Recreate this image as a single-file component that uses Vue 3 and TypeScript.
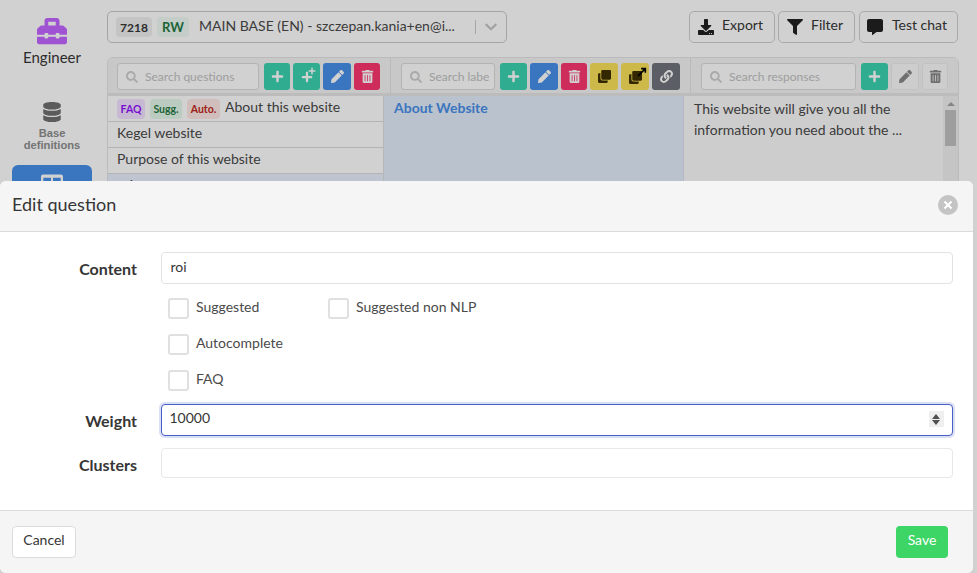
<script setup lang="ts">
import { h, onMounted, ref } from 'vue'

const paths: Record<string, [number, string]> = {
  plus: [448, 'M416 208H272V64c0-17.67-14.33-32-32-32h-32c-17.67 0-32 14.33-32 32v144H32c-17.67 0-32 14.33-32 32v32c0 17.67 14.33 32 32 32h144v144c0 17.67 14.33 32 32 32h32c17.67 0 32-14.33 32-32V304h144c17.67 0 32-14.33 32-32v-32c0-17.67-14.33-32-32-32z'],
  pencil: [512, 'M497.9 142.1l-46.1 46.1c-4.7 4.7-12.3 4.7-17 0l-111-111c-4.7-4.7-4.7-12.3 0-17l46.1-46.1c18.7-18.7 49.1-18.7 67.9 0l60.1 60.1c18.8 18.7 18.8 49.1 0 67.9zM284.2 99.8L21.6 362.4.4 483.9c-2.9 16.4 11.4 30.6 27.8 27.8l121.5-21.3 262.6-262.6c4.7-4.7 4.7-12.3 0-17l-111-111c-4.8-4.7-12.4-4.7-17.1 0z'],
  trash: [448, 'M32 464a48 48 0 0 0 48 48h288a48 48 0 0 0 48-48V128H32zm272-256a16 16 0 0 1 32 0v224a16 16 0 0 1-32 0zm-96 0a16 16 0 0 1 32 0v224a16 16 0 0 1-32 0zm-96 0a16 16 0 0 1 32 0v224a16 16 0 0 1-32 0zM432 32H312l-9.4-18.7A24 24 0 0 0 281.1 0H166.8a23.72 23.72 0 0 0-21.4 13.3L136 32H16A16 16 0 0 0 0 48v32a16 16 0 0 0 16 16h416a16 16 0 0 0 16-16V48a16 16 0 0 0-16-16z'],
  search: [512, 'M505 442.7L405.3 343c-4.5-4.5-10.6-7-17-7H372c27.6-35.3 44-79.7 44-128C416 93.1 322.9 0 208 0S0 93.1 0 208s93.1 208 208 208c48.3 0 92.7-16.4 128-44v16.3c0 6.4 2.5 12.5 7 17l99.7 99.7c9.4 9.4 24.6 9.4 33.9 0l28.3-28.3c9.4-9.4 9.4-24.6.1-34zM208 336c-70.7 0-128-57.2-128-128 0-70.7 57.2-128 128-128 70.7 0 128 57.2 128 128 0 70.7-57.2 128-128 128z'],
  filter: [512, 'M487.976 0H24.028C2.71 0-8.047 25.866 7.058 40.971L192 225.941V432c0 7.831 3.821 15.17 10.237 19.662l80 55.98C298.02 518.69 320 507.493 320 487.98V225.941l184.947-184.97C520.021 25.896 509.338 0 487.976 0z'],
  download: [512, 'M216 0h80c13.3 0 24 10.7 24 24v168h87.7c17.8 0 26.7 21.5 14.1 34.1L269.7 378.3c-7.5 7.5-19.8 7.5-27.3 0L90.1 226.1c-12.6-12.6-3.7-34.1 14.1-34.1H192V24c0-13.3 10.7-24 24-24zm296 376v112c0 13.3-10.7 24-24 24H24c-13.3 0-24-10.7-24-24V376c0-13.3 10.7-24 24-24h146.7l49 49c20.1 20.1 52.5 20.1 72.6 0l49-49H488c13.3 0 24 10.7 24 24zm-124 88c0-11-9-20-20-20s-20 9-20 20 9 20 20 20 20-9 20-20zm64 0c0-11-9-20-20-20s-20 9-20 20 9 20 20 20 20-9 20-20z'],
  comment: [512, 'M448 0H64C28.7 0 0 28.7 0 64v288c0 35.3 28.7 64 64 64h96v84c0 9.8 11.2 15.5 19.1 9.7L304 416h144c35.3 0 64-28.7 64-64V64c0-35.3-28.7-64-64-64z'],
  database: [448, 'M448 73.143v45.714C448 159.143 347.667 192 224 192S0 159.143 0 118.857V73.143C0 32.857 100.333 0 224 0s224 32.857 224 73.143zM448 176v102.857C448 319.143 347.667 352 224 352S0 319.143 0 278.857V176c48.125 33.143 136.208 48.572 224 48.572S399.874 209.143 448 176zm0 160v102.857C448 479.143 347.667 512 224 512S0 479.143 0 438.857V336c48.125 33.143 136.208 48.572 224 48.572S399.874 369.143 448 336z'],
  toolbox: [512, 'M502.63 214.63l-45.25-45.25c-6-6-14.14-9.37-22.63-9.37H384V80c0-26.51-21.49-48-48-48H176c-26.51 0-48 21.49-48 48v80H77.25c-8.49 0-16.62 3.37-22.63 9.37L9.37 214.63c-6 6-9.37 14.14-9.37 22.63V320h128v-16c0-8.84 7.16-16 16-16h32c8.84 0 16 7.16 16 16v16h128v-16c0-8.84 7.16-16 16-16h32c8.84 0 16 7.16 16 16v16h128v-82.75c0-8.48-3.37-16.62-9.37-22.62zM320 160H192V96h128v64zm64 208c0 8.84-7.16 16-16 16h-32c-8.84 0-16-7.16-16-16v-16H192v16c0 8.84-7.16 16-16 16h-32c-8.84 0-16-7.16-16-16v-16H0v96c0 17.67 14.33 32 32 32h448c17.67 0 32-14.33 32-32v-96H384v16z'],
  clone: [512, 'M464 0c26.51 0 48 21.49 48 48v288c0 26.51-21.49 48-48 48H176c-26.51 0-48-21.49-48-48V48c0-26.51 21.49-48 48-48h288M176 416c-44.112 0-80-35.888-80-80V128H48c-26.51 0-48 21.49-48 48v288c0 26.51 21.49 48 48 48h288c26.51 0 48-21.49 48-48v-48H176z'],
  link: [512, 'M326.612 185.391c59.747 59.809 58.927 155.698.36 214.59-.11.12-.24.25-.36.37l-67.2 67.2c-59.27 59.27-155.699 59.262-214.96 0-59.27-59.26-59.27-155.7 0-214.96l37.106-37.106c9.84-9.84 26.786-3.3 27.294 10.606.648 17.722 3.826 35.527 9.69 52.721 1.986 5.822.567 12.262-3.783 16.612l-13.087 13.087c-28.026 28.026-28.905 73.66-1.155 101.96 28.024 28.579 74.086 28.749 102.325.51l67.2-67.19c28.191-28.191 28.073-73.757 0-101.83-3.701-3.694-7.429-6.564-10.341-8.569a16.037 16.037 0 0 1-6.947-12.606c-.396-10.567 3.348-21.456 11.698-29.806l21.054-21.055c5.521-5.521 14.182-6.199 20.584-1.731a152.482 152.482 0 0 1 20.522 17.197zM467.547 44.449c-59.261-59.262-155.69-59.27-214.96 0l-67.2 67.2c-.12.12-.25.25-.36.37-58.566 58.892-59.387 154.781.36 214.59a152.454 152.454 0 0 0 20.521 17.196c6.402 4.468 15.064 3.789 20.584-1.731l21.054-21.055c8.35-8.35 12.094-19.239 11.698-29.806a16.037 16.037 0 0 0-6.947-12.606c-2.912-2.005-6.64-4.875-10.341-8.569-28.073-28.073-28.191-73.639 0-101.83l67.2-67.19c28.239-28.239 74.3-28.069 102.325.51 27.75 28.3 26.872 73.934-1.155 101.96l-13.087 13.087c-4.35 4.35-5.769 10.79-3.783 16.612 5.864 17.194 9.042 34.999 9.69 52.721.509 13.906 17.454 20.446 27.294 10.606l37.106-37.106c59.271-59.259 59.271-155.699.001-214.959z'],
  chevron: [448, 'M207.029 381.476L12.686 187.132c-9.373-9.373-9.373-24.569 0-33.941l22.667-22.667c9.357-9.357 24.522-9.375 33.901-.04L224 284.505l154.745-154.021c9.379-9.335 24.544-9.317 33.901.04l22.667 22.667c9.373 9.373 9.373 24.569 0 33.941L240.971 381.476c-9.373 9.372-24.569 9.372-33.942 0z'],
  layout: [512, 'M464 32H48C21.5 32 0 53.5 0 80v352c0 26.5 21.5 48 48 48h416c26.500 0 48-21.500 48-48V80c0-26.500-21.500-48-48-48zM232 432H54V256h178zm0-208H54V110h178zm226 208H280V256h178zm0-208H280V110h178z'],
}

const Ico = (props: { n: string }) => {
  const [w, d] = paths[props.n]
  return h('svg', { viewBox: `0 0 ${w} 512`, fill: 'currentColor' }, [h('path', { d })])
}
Ico.props = ['n']

interface Btn { icon: string; tone: string; w: number }
const columns: { ph: string; search: number; cls: string; btns: Btn[] }[] = [
  {
    ph: 'Search questions', search: 142, cls: 'c1',
    btns: [
      { icon: 'plus', tone: 'green', w: 26 },
      { icon: 'plusplus', tone: 'green', w: 27 },
      { icon: 'pencil', tone: 'blue', w: 28 },
      { icon: 'trash', tone: 'red', w: 26 },
    ],
  },
  {
    ph: 'Search labels', search: 94, cls: 'c2',
    btns: [
      { icon: 'plus', tone: 'green', w: 27 },
      { icon: 'pencil', tone: 'blue', w: 28 },
      { icon: 'trash', tone: 'red', w: 26 },
      { icon: 'clone', tone: 'yellow', w: 28 },
      { icon: 'cloneout', tone: 'yellow', w: 28 },
      { icon: 'link', tone: 'dark', w: 28 },
    ],
  },
  {
    ph: 'Search responses', search: 155, cls: 'c3',
    btns: [
      { icon: 'plus', tone: 'green', w: 27 },
      { icon: 'pencil', tone: 'ghost', w: 28 },
      { icon: 'trash', tone: 'ghost', w: 26 },
    ],
  },
]

const weight = ref<HTMLInputElement | null>(null)
onMounted(() => weight.value?.focus())
</script>

<template>
  <div class="page">
    <aside class="side">
      <div class="role">
        <Ico n="toolbox" class="role-ico" />
        <span>Engineer</span>
      </div>
      <div class="nav">
        <Ico n="database" class="nav-ico" />
        <span>Base<br />definitions</span>
      </div>
      <div class="nav active">
        <Ico n="layout" class="nav-ico" />
      </div>
    </aside>

    <main class="main">
      <header class="top">
        <div class="base">
          <span class="chip grey">7218</span>
          <span class="chip rw">RW</span>
          <span class="base-name">MAIN BASE (EN) - szczepan.kania+en@i...</span>
          <span class="sep"></span>
          <Ico n="chevron" class="chev" />
        </div>
        <div class="actions">
          <button class="act e"><Ico n="download" class="act-ico" />Export</button>
          <button class="act f"><Ico n="filter" class="act-ico" />Filter</button>
          <button class="act t"><Ico n="comment" class="act-ico" />Test chat</button>
        </div>
      </header>

      <section class="panel">
        <div class="bar">
          <div v-for="c in columns" :key="c.ph" class="tools" :class="c.cls">
            <div class="search" :style="{ width: c.search + 'px' }">
              <Ico n="search" class="s-ico" />
              <span class="s-text">{{ c.ph }}</span>
            </div>
            <div class="btns">
              <button
                v-for="(b, i) in c.btns"
                :key="i"
                class="tb"
                :class="b.tone"
                :style="{ width: b.w + 'px' }"
              >
                <span v-if="b.icon === 'plusplus'" class="pp">
                  <Ico n="plus" class="pp-a" />
                  <Ico n="plus" class="pp-b" />
                </span>
                <span v-else-if="b.icon === 'cloneout'" class="pp">
                  <Ico n="clone" class="co-a" />
                  <svg class="co-b" viewBox="0 0 12 12" fill="none" stroke="#000" stroke-width="2"><path d="M1 11 9 3M5 2h5v5" /></svg>
                </span>
                <Ico v-else :n="b.icon" class="tb-ico" />
              </button>
            </div>
          </div>
        </div>
        <div class="cols">
          <div class="qs">
            <div class="q">
              <span class="tag faq">FAQ</span><span class="tag sugg">Sugg.</span><span class="tag auto">Auto.</span>
              <span>About this website</span>
            </div>
            <div class="q">Kegel website</div>
            <div class="q">Purpose of this website</div>
            <div class="q sel">roi</div>
          </div>
          <div class="ls"><strong>About Website</strong></div>
          <div class="rs">
            <p>This website will give you all the information you need about the ...</p>
            <div class="scroll">
              <span class="arrow"></span>
              <span class="thumb"></span>
            </div>
          </div>
        </div>
      </section>
    </main>

    <div class="shade"></div>

    <div class="modal">
      <div class="m-head">
        <span class="m-title">Edit question</span>
        <button class="close" aria-label="Close"></button>
      </div>
      <div class="m-body">
        <div class="field">
          <label class="lab">Content</label>
          <input class="inp" value="roi" />
        </div>
        <div class="checks">
          <div class="check-row">
            <label class="chk w160"><span class="box"></span>Suggested</label>
            <label class="chk"><span class="box"></span>Suggested non NLP</label>
          </div>
          <div class="check-row">
            <label class="chk"><span class="box"></span>Autocomplete</label>
          </div>
          <div class="check-row">
            <label class="chk"><span class="box"></span>FAQ</label>
          </div>
        </div>
        <div class="field">
          <label class="lab">Weight</label>
          <div class="num">
            <input ref="weight" class="inp focus" type="number" value="10000" />
            <span class="spin"><i class="up"></i><i class="down"></i></span>
          </div>
        </div>
        <div class="field f-clusters">
          <label class="lab">Clusters</label>
          <div class="inp tags"></div>
        </div>
      </div>
      <div class="m-foot">
        <button class="cancel">Cancel</button>
        <button class="save">Save</button>
      </div>
    </div>
  </div>
</template>

<style>
html, body { margin: 0; overflow: hidden; background: #fff; }
</style>

<style scoped>
* { box-sizing: border-box; }
.page {
  position: relative;
  width: 977px;
  height: 573px;
  overflow: hidden;
  display: flex;
  font-family: Lato, sans-serif;
  color: #4a4a4a;
  background: #fff;
}
button { font-family: inherit; cursor: pointer; }

.side { width: 104px; margin-right: 3px; flex: none; display: flex; flex-direction: column; align-items: center; }
.role { display: flex; flex-direction: column; align-items: center; padding-top: 17px; color: #363636; font-size: 15px; line-height: 20px; }
.role-ico { width: 30px; height: 30px; color: #c365ff; margin-bottom: 1px; margin-top: -1px; }
.nav {
  width: 80px;
  display: flex;
  flex-direction: column;
  align-items: center;
  margin-top: 35px;
  font: bold 11.2px/12px "Liberation Sans", sans-serif;
  color: #8e8e8e;
  text-align: center;
}
.nav-ico { width: 20px; height: 20px; color: #6f6f6f; margin-bottom: 5px; }
.nav span { display: block; }
.nav.active { height: 70px; margin-top: 14px; background: #478fe9; border-radius: 6px; padding-top: 8px; }
.nav.active .nav-ico { color: #fff; width: 22px; height: 22px; }

.main { flex: 1; min-width: 0; padding: 11px 19px 0 0; display: flex; flex-direction: column; }
.top { display: flex; justify-content: space-between; height: 32px; }
.base {
  width: 400px;
  border: 1px solid #c9c9c9;
  border-radius: 5px;
  background: #fff;
  display: flex;
  align-items: center;
  padding-left: 8px;
  font-size: 14px;
}
.chip { height: 20px; border-radius: 4px; display: flex; align-items: center; justify-content: center; font-weight: 700; font-size: 12px; }
.chip.grey { width: 36px; background: #f0f0f0; color: #363636; }
.chip.rw { width: 32px; margin-left: 5px; background: #effaf3; color: #257942; font-size: 13px; }
.base-name { margin-left: 10px; width: 268px; white-space: nowrap; margin-top: -3px; }
.sep { width: 1px; height: 14px; background: #ccc; margin-left: 8px; }
.chev { width: 12px; height: 14px; color: #c4c4c4; margin-left: 9px; }
.actions { display: flex; gap: 3px; }
.act {
  height: 32px;
  background: #fff;
  border: 1px solid #cfcfcf;
  border-radius: 5px;
  color: #363636;
  font-size: 14px;
  display: flex;
  align-items: center;
  justify-content: flex-start;
  padding: 0 0 5px 8px;
}
.act-ico { width: 16px; height: 16px; color: #222; margin-right: 8px; margin-top: 5px; }
.act.e { width: 86px; }
.act.f { width: 77px; margin-right: 1px; }
.act.t { width: 99px; padding-left: 7px; }
.act.t .act-ico { margin-right: 9px; }

.panel {
  margin-top: 14px;
  margin-right: -1px;
  border: 1px solid #e5e5e5;
  border-radius: 6px 6px 0 0;
  height: 500px;
  background: #fbfbfb;
  overflow: hidden;
}
.bar { display: flex; height: 38px; background: #f5f5f5; border-bottom: 3px solid #e6e6e6; }
.tools { display: flex; align-items: flex-start; padding-top: 5px; border-right: 1px solid #e2e2e2; }
.tools.c1 { width: 283px; padding-left: 9px; }
.tools.c2 { width: 300px; padding-left: 10px; }
.tools.c3 { flex: 1; padding-left: 10px; border-right: 0; }
.search {
  height: 27px;
  border: 1px solid #dbdbdb;
  border-radius: 3px;
  background: #fff;
  display: flex;
  align-items: center;
  padding: 0 5px 0 8px;
  font-size: 12px;
  color: #c2c2c2;
  white-space: nowrap;
  flex: none;
}
.s-text { flex: 1; min-width: 0; overflow: hidden; }
.s-ico { width: 12px; height: 12px; margin-right: 7px; color: #d0d0d0; flex: none; }
.btns { display: flex; gap: 3px; margin-left: 5px; }
.tb { height: 27px; border: 0; border-radius: 3px; padding: 0; display: flex; align-items: center; justify-content: center; position: relative; }
.tb-ico { width: 13px; height: 13px; }
.green { background: #3bd4b0; color: #fff; }
.blue { background: #478fe9; color: #fff; }
.red { background: #fc366e; color: #fff; }
.yellow { background: #fae25b; color: #3f3000; }
.dark { background: #6f747c; color: #fff; }
.ghost { background: #fafafa; border: 1px solid #ececec; color: #888; }
.pp { position: relative; width: 17px; height: 16px; display: block; }
.pp-a { position: absolute; left: 3px; bottom: 2px; width: 12px; height: 12px; }
.pp-b { position: absolute; right: -1px; top: -1.5px; width: 8px; height: 8px; }
.co-a { position: absolute; left: 2px; bottom: 1px; width: 13px; height: 13px; }
.co-b { position: absolute; right: -3px; top: -2px; width: 10px; height: 10px; }

.cols { display: flex; height: 460px; }
.qs { width: 276px; border-right: 1px solid #e0e0e0; flex: none; }
.q { height: 26px; border-bottom: 1px solid #dcdcdc; padding: 0 0 0 9px; font-size: 14px; line-height: 21px; color: #4a4a4a; display: flex; align-items: flex-start; background: #fff; }
.q.sel { background: #e8f1ff; }
.tag { height: 20px; margin-top: 2.500px; border-radius: 4px; font-weight: 700; font-size: 10.5px; line-height: 20px; text-align: center; margin-right: 5px; }
.faq { width: 28px; background: #f3e2ff; color: #9013fe; }
.sugg { width: 32px; background: #e6f8eb; color: #257942; }
.auto { width: 33px; background: #fde8e6; color: #c0271a; }
.ls { width: 300px; flex: none; background: #e3edfa; padding: 1px 10px; font-size: 14px; line-height: 22px; color: #478fe9; border-right: 1px solid #dde; }
.rs { flex: 1; display: flex; position: relative; padding: 2px 0 0 10px; font-size: 14px; line-height: 21px; color: #4a4a4a; }
.rs p { margin: 0; width: 225px; }
.scroll { position: absolute; right: 0; top: 0; bottom: 0; width: 15px; background: #f1f1f1; }
.arrow { position: absolute; left: 4px; top: 6px; width: 0; height: 0; border-left: 4px solid transparent; border-right: 4px solid transparent; border-bottom: 4px solid #a3a3a3; }
.thumb { position: absolute; left: 2px; top: 14px; width: 11px; height: 36px; background: #c1c1c1; }

.shade { position: absolute; inset: 0; background: rgba(0, 0, 0, 0.18); }

.modal {
  position: absolute;
  left: 0;
  top: 181px;
  width: 973px;
  bottom: 0;
  display: flex;
  flex-direction: column;
  border-radius: 6px;
  overflow: hidden;
  background: #fff;
}
.m-head {
  height: 51px;
  flex: none;
  background: #f5f5f5;
  border-bottom: 1px solid #dbdbdb;
  display: flex;
  align-items: center;
  justify-content: space-between;
  padding: 0 15px 0 12px;
}
.m-title { font-size: 18px; color: #363636; margin-top: -3px; margin-bottom: 2px; }
.close { width: 20px; height: 20px; border: 0; padding: 0; border-radius: 50%; background: #c4c4c4; position: relative; margin-bottom: 3px; }
.close::before, .close::after { content: ""; position: absolute; left: 5px; top: 9px; width: 10px; height: 2px; background: #fff; }
.close::before { transform: rotate(45deg); }
.close::after { transform: rotate(-45deg); }

.m-body { flex: 1; padding: 20px 20px 0 12px; }
.field { display: grid; grid-template-columns: 125px 1fr; column-gap: 24px; height: 32px; }
.lab { font-weight: 700; font-size: 16px; line-height: 34px; height: 32px; color: #363636; text-align: right; }
.f-clusters { margin-top: 12px; height: 30px; }
.inp {
  width: 100%;
  height: 32px;
  border: 1px solid #e2e2e2;
  border-radius: 4px;
  background: #fff;
  padding: 0 0 3px 8.500px;
  font: 14px Lato, sans-serif;
  color: #363636;
  outline: none;
  caret-color: transparent;
  display: block;
}
.num { position: relative; }
.inp.focus { border-color: #485fc7; box-shadow: 0 0 0 2px rgba(72, 95, 199, 0.2); padding: 0 6px 6px 7.500px; appearance: textfield; }
.inp.focus::-webkit-inner-spin-button { appearance: none; }
.spin { position: absolute; right: 9px; top: 7px; width: 15px; height: 16px; background: #efefef; }
.spin i { position: absolute; left: 3px; width: 0; height: 0; border-left: 4.500px solid transparent; border-right: 4.500px solid transparent; }
.spin .up { top: 3px; border-bottom: 5px solid #505050; }
.spin .down { bottom: 2px; border-top: 5px solid #505050; }
.inp.tags { height: 30px; border-color: #e8e8e8; }
.checks { padding: 14px 0 0 156px; height: 120px; }
.check-row { display: flex; height: 36px; }
.chk { display: flex; align-items: flex-start; font-size: 14px; line-height: 18px; color: #4a4a4a; }
.w160 { width: 160px; }
.box { width: 21px; height: 21px; border: 2px solid #e0e0e0; border-radius: 3px; margin-right: 7px; background: #fff; flex: none; }

.m-foot {
  height: 63px;
  flex: none;
  background: #f5f5f5;
  border-top: 1px solid #dbdbdb;
  display: flex;
  justify-content: space-between;
  padding: 15px 25px 0 12px;
}
.cancel { width: 64px; height: 32px; background: #fff; border: 1px solid #dbdbdb; border-radius: 4px; font-size: 14px; color: #363636; padding: 0 0 5px; }
.save { width: 52px; height: 32px; background: #3dd565; border: 0; border-radius: 4px; font-size: 14px; color: #fff; padding: 0 0 5px; }
</style>
